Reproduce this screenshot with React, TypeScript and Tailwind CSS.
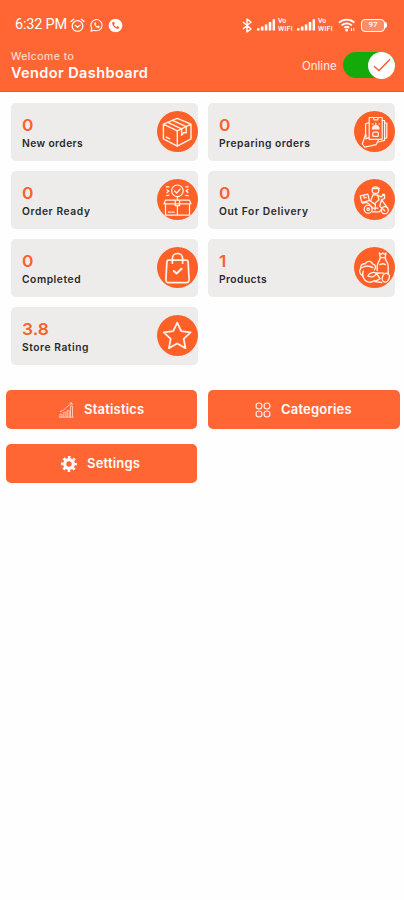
import type { ReactNode } from 'react';

interface Stat {
  value: string;
  label: string;
  labelClass: string;
  icon: ReactNode;
}

function BoxIcon() {
  return (
    <svg viewBox="0 0 41 41" className="size-full" fill="none" stroke="currentColor" strokeWidth="1.4" strokeLinejoin="round" strokeLinecap="round">
      <path d="M20.3 7.3 34 13.2v14.6L20.3 35.2 6.4 27.8V13.2L20.3 7.3ZM6.4 13.2l13.9 6.6L34 13.2M20.3 19.8v15.4" />
      <path d="m10.8 11.4 13.8 6.4M15.6 9.3l13.6 6.3M24.6 17.8v6.4l2.2-2.7 2.4 .4v-6.3M9.3 26.1l3.4 1.7" />
    </svg>
  );
}

function ReceiptIcon() {
  return (
    <svg viewBox="0 0 41 41" className="size-full" fill="none" stroke="currentColor" strokeWidth="1.2" strokeLinejoin="round" strokeLinecap="round">
      <path d="M15.2 6.5h13v21.8h-13zM15.2 11.6l-3.6 1.1v10.6L8.3 33l2.5 3.2 11.4-2.6 2.6-5.3M12 23.5v4.4l3.2-1.5" />
      <path d="M28.2 9.5h2.4v19.8l-6.2 1.7M30.6 12h2.2v14.8l-2.2 1M19.3 6.5l.8 2.4h3.6l.8-2.4" />
      <path d="M18.4 17.8c0-4.4 6.7-4.4 6.7 0h-6.7Z" fill="currentColor" />
      <rect x="18.8" y="21.2" width="5.6" height="4.2" rx="1" />
      <path d="M18 13h1.2M24.8 13h1M21.8 12.2v1.2" />
    </svg>
  );
}

function PackageReadyIcon() {
  return (
    <svg viewBox="0 0 41 41" className="size-full" fill="none" stroke="currentColor" strokeWidth="1.2" strokeLinejoin="round" strokeLinecap="round">
      <circle cx="20.4" cy="11.8" r="5.8" />
      <path d="m17.5 12 2.1 2 3.7-4M20.4 17.6v3.2" />
      <path d="M8.5 24.5v11.7h24V24.5M8.5 21.2h24l1.5 3.6H7l1.5-3.6ZM18.2 21.2v5.4h4.4v-5.4M20.4 27v9.2M11.5 33.2h2M15 33.2h2" />
      <path d="M9.2 7.8h3M9.8 10.8l2 1.3-2 1.6M9.3 16.5l2.5-.4M28.8 7.8h2.4M31 10.4l-2 1.4 2 1.7M28.7 16.3l2.6.4" />
    </svg>
  );
}

function ScooterIcon() {
  return (
    <svg viewBox="0 0 41 41" className="size-full" fill="none" stroke="currentColor" strokeWidth="1.3" strokeLinejoin="round" strokeLinecap="round">
      <circle cx="21.5" cy="11.2" r="3.3" />
      <path d="M19.2 9.5h6.2" />
      <path d="m6.2 16.8 7.6-1.6 1.6 6.4-7.6 1.8-1.6-6.6ZM9.6 16.3l.6 2.6 2-.4" />
      <path d="m19 15.6-2.4 6.6 4.8 3.4-.4 5.2M19 15.6l4.6.4 1.4 4.6-3.6 3.4M23.6 16l3.4 2 2.6-2.2" />
      <path d="M28.5 15.5h2v4l-3 1.2 6 8.2M27.5 20.7l-1.8 6.6 5 4.4" />
      <path d="M8.6 24.4c2.4-1.6 5.4-1 6.8 1l3.4 3.8h5" />
      <circle cx="14.2" cy="30.2" r="4" />
      <circle cx="14.2" cy="30.2" r="1.2" />
      <circle cx="30.8" cy="31.2" r="3.5" />
      <path d="M18.4 32.8h7l2-2.4" />
    </svg>
  );
}

function BagIcon() {
  return (
    <svg viewBox="0 0 41 41" className="size-full" fill="none" stroke="currentColor" strokeWidth="1.7" strokeLinejoin="round" strokeLinecap="round">
      <path d="M11.6 13.2h17.8c1 0 1.6.7 1.7 1.6l1 17.6c.1 1.8-.9 3.2-2.7 3.2H11.6c-1.8 0-2.8-1.4-2.7-3.2l1-17.6c.1-.9.7-1.6 1.7-1.6Z" />
      <path d="M15.4 16.2v-4.6c0-6.8 10.2-6.8 10.2 0v4.6" />
      <path d="m16.8 24 2.8 2.5 5-4.7" strokeWidth="2" />
    </svg>
  );
}

function GroceriesIcon() {
  return (
    <svg viewBox="0 0 41 41" className="size-full" fill="none" stroke="currentColor" strokeWidth="1.35" strokeLinejoin="round" strokeLinecap="round">
      <path d="m25.4 6 1.8 1.2L28.8 6l1.6 1.2L32 6l-.8 4.6c.3 3.6 3 4.6 3 8.8v8.2M25.4 6l.9 4.6c-.4 3.7-3.1 4.6-3.1 8.8v4.2M26.3 10.6h4.9M26 17.6c1.6-1 3.8-1 5.4 0" />
      <path d="M8.8 28.5c-3.3-1-4.1-4.8-2-7.2-.3-3.2 2-5.2 4.5-4.4 1.3-3.7 6.5-3.2 7 0 3.3.3 4.2 3.8 2.2 6M8 20.7c3.2-2.2 7.3-2.2 11 0" />
      <path d="M9.3 24.2c-2.1 4.8 1 10.7 6.4 11 2.3.1 3.8-.9 5.2-1.7M13.8 29c1.8-3.2 5.4-4.4 8.2-3l7.8.2M14 29c3.6 1.8 7.2.6 8.4-2.5l3.7 5.2-5.2 3 6.9.8" />
      <ellipse cx="31.8" cy="30.6" rx="3.4" ry="4.6" transform="rotate(20 31.8 30.6)" />
    </svg>
  );
}

function StarIcon() {
  return (
    <svg viewBox="0 0 41 41" className="size-full" fill="none" stroke="currentColor" strokeWidth="1.8" strokeLinejoin="round">
      <path d="m20.2 7.6 4 8.6 9.4 1.1-6.9 6.5 1.8 9.3-8.3-4.6-8.3 4.6 1.8-9.3-6.9-6.5 9.4-1.1 4-8.6Z" />
    </svg>
  );
}

function StatisticsIcon() {
  return (
    <svg viewBox="0 0 16 16" className="size-4 opacity-80" fill="none" stroke="currentColor" strokeWidth="0.8" strokeLinejoin="round">
      <path d="M.8 15.2h14.7M2 15v-2.8h2V15M5.8 15v-4.7h2V15M9.2 15V8.7h2V15M12.5 15V4.2h2V15" />
      <path d="m1.8 9.6 3.5-1.2L8.7 5 14 1M11.5 1H14v2.3" />
    </svg>
  );
}

function CategoriesIcon() {
  return (
    <svg viewBox="0 0 16 16" className="size-4 opacity-90" fill="none" stroke="currentColor" strokeWidth="1.1">
      <circle cx="4" cy="4" r="3" />
      <circle cx="12" cy="4" r="3" />
      <circle cx="4" cy="12" r="3" />
      <circle cx="12" cy="12" r="3" />
    </svg>
  );
}

function GearIcon() {
  return (
    <svg viewBox="0 0 16 16" className="size-4" fill="none" stroke="currentColor">
      <circle cx="8" cy="8" r="4.3" strokeWidth="3.2" />
      <circle cx="8" cy="8" r="6.7" strokeWidth="2.4" strokeDasharray="2.63 2.63" strokeDashoffset="1.3" />
    </svg>
  );
}

function SignalIcon() {
  return (
    <svg viewBox="0 0 18 12" className="h-3 w-[18px] shrink-0" fill="currentColor">
      <path d="M0 9.3h2.6v2.2H0zM3.9 7.6h2.6v3.9H3.9zM7.8 5.4h2.6v6.1H7.8zM11.7 3h2.6v8.5h-2.6zM15.6.3h2.4v11.2h-2.4z" />
    </svg>
  );
}

function VoWifi() {
  return (
    <span className="flex w-[16px] shrink-0 flex-col text-[7px] leading-[8.5px] font-medium">
      <span>Vo</span>
      <span className="tracking-[0.3px]">WiFi</span>
    </span>
  );
}

function StatusBar() {
  return (
    <div className="flex h-[50px] items-center pl-[15px] pr-[17px] font-['Roboto',sans-serif]">
      <span className="w-[54px] text-[14.5px] tracking-[-0.2px] whitespace-nowrap">6:32 PM</span>
      <svg viewBox="0 0 16 16" className="ml-px size-[15px]" fill="none" stroke="currentColor" strokeWidth="1.3" strokeLinecap="round">
        <circle cx="8" cy="8.6" r="5.7" />
        <path d="M1 3.8 4 1.3M15 3.8l-3-2.5M5.5 7.8 8 9.8l3-2.2" />
      </svg>
      <svg viewBox="0 0 16 16" className="ml-[4px] size-[15px]" fill="none" stroke="currentColor" strokeWidth="1.1" strokeLinejoin="round">
        <path d="m2 14.2.9-3.4A6 6 0 1 1 5.3 13L2 14.2Z" />
        <path d="M5.5 5.5c.4 2.7 2.2 4.7 5 5.2l1-1.5-1.9-.9-.8.8c-1-.4-1.6-1.1-2-2l.7-.8-.7-1.8-1.3 1Z" fill="currentColor" strokeWidth=".3" />
      </svg>
      <svg viewBox="0 0 16 16" className="ml-1 size-[15px]">
        <circle cx="8" cy="8" r="7.3" fill="currentColor" />
        <path d="M4.2 5c.6 3.5 3 6 6.7 6.7l1.4-1.8-2.3-1.3-1.2 1C7.6 9 6.8 8.2 6.3 7.1l1.1-1L6.2 3.7 4.2 5Z" fill="#ff6633" />
      </svg>
      <div className="ml-auto flex items-center">
        <svg viewBox="0 0 10 15" className="h-[15px] w-[10px]" fill="none" stroke="currentColor" strokeWidth="1.4" strokeLinejoin="round">
          <path d="m1 4 8 7-4 3V1l4 3-8 7" />
        </svg>
        <div className="ml-[5px] flex items-center gap-[3px]">
          <SignalIcon />
          <VoWifi />
          <SignalIcon />
          <VoWifi />
        </div>
        <svg viewBox="0 0 18 14" className="ml-[4px] h-[14px] w-[18px]" fill="none" stroke="currentColor" strokeWidth="1.7">
          <path d="M1 4.6c4.6-4.1 11-4.1 15.4 0M3.6 7.4c3-2.8 7.3-2.8 10.2 0M6.2 9.9c1.5-1.4 3.5-1.4 5 0" />
          <circle cx="8.7" cy="12" r=".7" fill="currentColor" />
          <path d="M13.5 10v3M15.8 10v3" strokeWidth="1" />
        </svg>
        <span className="ml-[5px] flex items-center">
          <span className="flex h-[13px] w-[24px] items-center justify-center rounded-[4px] border border-white bg-white/25 text-[8px] leading-none font-medium">97</span>
          <span className="h-1.5 w-[2px] rounded-r bg-white" />
        </span>
      </div>
    </div>
  );
}

function OnlineToggle() {
  return (
    <div className="flex items-center">
      <span className="w-[41px] pt-[3px] text-[11.5px] whitespace-nowrap text-[#fff0e8]">Online</span>
      <div className="flex h-[26px] w-[52px] items-center justify-end rounded-full bg-[#14aa0b]">
        <span className="flex size-[27px] shrink-0 items-center justify-center rounded-full bg-white">
          <svg viewBox="0 0 20 16" className="h-4 w-5" fill="none" stroke="#ed5d32" strokeWidth="1.4">
            <path d="m2 9.2 5 4.3L18 2.3" />
          </svg>
        </span>
      </div>
    </div>
  );
}

const stats: Stat[] = [
  { value: '0', label: 'New orders', labelClass: 'tracking-[0.4px]', icon: <BoxIcon /> },
  { value: '0', label: 'Preparing orders', labelClass: 'tracking-[0.5px]', icon: <ReceiptIcon /> },
  { value: '0', label: 'Order Ready', labelClass: 'tracking-[0.6px]', icon: <PackageReadyIcon /> },
  { value: '0', label: 'Out For Delivery', labelClass: 'tracking-[0.6px]', icon: <ScooterIcon /> },
  { value: '0', label: 'Completed', labelClass: 'tracking-[0.55px]', icon: <BagIcon /> },
  { value: '1', label: 'Products', labelClass: 'tracking-[0.45px]', icon: <GroceriesIcon /> },
  { value: '3.8', label: 'Store Rating', labelClass: 'tracking-[0.55px]', icon: <StarIcon /> },
];

function StatCard({ stat }: { stat: Stat }) {
  return (
    <div className="flex h-[58px] items-center justify-between rounded-[5px] bg-[#edecea] pl-[11px]">
      <div className="pt-[2px]">
        <p className="origin-left scale-x-105 text-[16.5px] leading-[20px] font-semibold text-[#fa6030]">{stat.value}</p>
        <p className={`text-[10.25px] leading-[16px] font-semibold whitespace-nowrap text-[#2a2a2a] ${stat.labelClass}`}>{stat.label}</p>
      </div>
      <span className="-mt-px size-[41px] rounded-full bg-[#ff6028] text-[#fff3e9]">{stat.icon}</span>
    </div>
  );
}

function ActionButton({ icon, label, className }: { icon: ReactNode; label: string; className: string }) {
  return (
    <button className={`flex h-[39px] items-center rounded-[5px] bg-[#ff6633] text-[13px] font-semibold tracking-[0.2px] text-white ${className}`}>
      {icon}
      <span>{label}</span>
    </button>
  );
}

export default function App() {
  return (
    <div className="min-h-screen w-full bg-[#fefefe] font-['Inter',sans-serif]">
      <header className="h-[92px] border-b border-[#f2531f] bg-[#ff6633] text-white">
        <StatusBar />
        <div className="flex items-start justify-between pl-[11px] pr-[9px]">
          <div>
            <p className="text-[10.5px] leading-[13px] tracking-[0.45px] text-[#ffe9df]">Welcome to</p>
            <h1 className="text-[14.5px] leading-[19px] font-semibold tracking-[0.4px]">Vendor Dashboard</h1>
          </div>
          <div className="pt-[2px]">
            <OnlineToggle />
          </div>
        </div>
      </header>

      <main>
        <section className="grid grid-cols-[187px_187px] gap-x-[10px] gap-y-[10px] pt-[11px] pl-[11px]">
          {stats.map((stat) => (
            <StatCard key={stat.label} stat={stat} />
          ))}
        </section>

        <section className="grid grid-cols-[191px_192px] gap-x-[11px] gap-y-[15px] pt-[25px] pl-[6px]">
          <ActionButton icon={<StatisticsIcon />} label="Statistics" className="gap-[10px] pl-[52px]" />
          <ActionButton icon={<CategoriesIcon />} label="Categories" className="gap-[10px] pl-[47px]" />
          <ActionButton icon={<GearIcon />} label="Settings" className="gap-[10px] pl-[55px]" />
        </section>
      </main>
    </div>
  );
}
